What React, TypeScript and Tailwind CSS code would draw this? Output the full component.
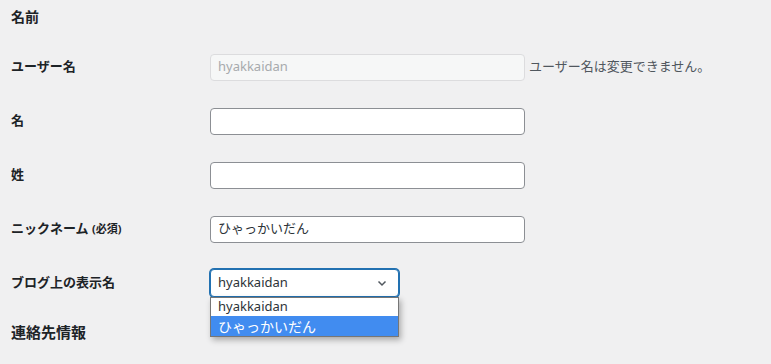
const font = { fontFamily: '"Noto Sans", "Noto Sans CJK JP", sans-serif' };

function Row({ label, children }: { label: React.ReactNode; children: React.ReactNode }) {
  return (
    <div className="flex items-center h-[54px]">
      <div className="w-[199px] text-[13px] font-bold text-[#1d2327]">{label}</div>
      {children}
    </div>
  );
}

function TextInput({ value }: { value?: string }) {
  return (
    <div className="w-[315px] h-[27px] bg-white border border-[#8c8f94] rounded-[4px] px-[7px] flex items-center text-[13px] text-[#2c3338]">
      {value}
    </div>
  );
}

export default function App() {
  return (
    <div className="w-[771px] h-[364px] bg-[#f0f0f1] overflow-hidden pl-[11px]" style={font}>
      <div className="pt-[6px] h-[40px] text-[14px] font-bold text-[#1d2327]">名前</div>
      <Row label="ユーザー名">
        <div className="w-[315px] h-[27px] bg-[#f6f7f7] border border-[#dcdcde] rounded-[4px] px-[7px] flex items-center text-[13px] text-[#a7aaad]">
          hyakkaidan
        </div>
        <span className="ml-[4px] text-[13px] text-[#50575e]">ユーザー名は変更できません。</span>
      </Row>
      <Row label="名">
        <TextInput />
      </Row>
      <Row label="姓">
        <TextInput />
      </Row>
      <Row label={<>ニックネーム <span className="text-[11px]">(必須)</span></>}>
        <TextInput value="ひゃっかいだん" />
      </Row>
      <Row label="ブログ上の表示名">
        <div className="relative">
          <div className="w-[189px] h-[28px] bg-white border border-[#2271b1] rounded-[4px] px-[7px] flex items-center justify-between text-[13px] text-[#2c3338] shadow-[0_0_0_1px_#2271b1]">
            <span>hyakkaidan</span>
            <svg width="12" height="12" viewBox="0 0 12 12" className="mr-[3px]">
              <path d="M2.5 4.5 L6 8 L9.5 4.5" fill="none" stroke="#50575e" strokeWidth="1.5" />
            </svg>
          </div>
          <div className="absolute left-0 top-[28px] w-[189px] bg-white border border-[#767676] shadow-[2px_3px_6px_rgba(0,0,0,0.3)] text-[13px]">
            <div className="h-[18px] px-[7px] flex items-center text-[#2c3338]">hyakkaidan</div>
            <div className="h-[20px] px-[7px] flex items-center bg-[#418cf0] text-white text-[14px]">ひゃっかいだん</div>
          </div>
        </div>
      </Row>
      <div className="pt-[11px] text-[15px] font-bold text-[#1d2327]">連絡先情報</div>
    </div>
  );
}
